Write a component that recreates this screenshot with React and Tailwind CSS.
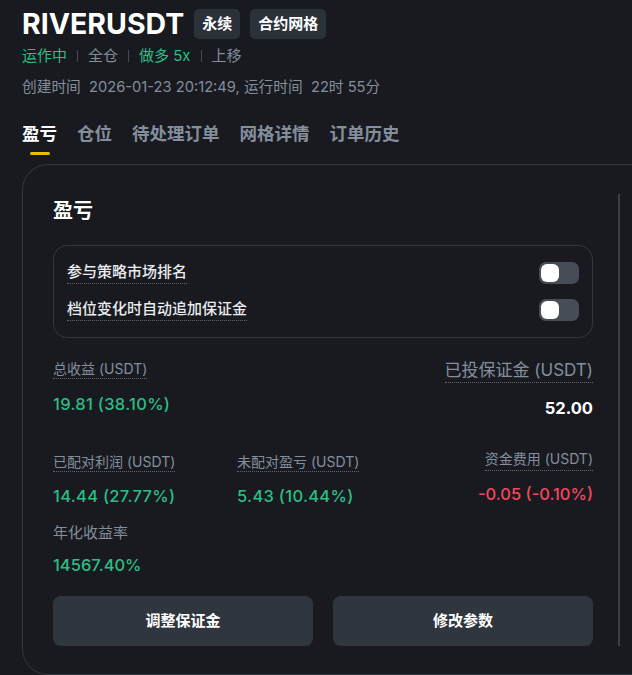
import React from 'react';

const green = 'text-[#2ebd85]';

function Toggle() {
  return (
    <div className="w-[40px] h-[22px] rounded-[7px] bg-[#474d57] p-[2px] flex items-center">
      <div className="w-[18px] h-[18px] rounded-[6px] bg-white" />
    </div>
  );
}

function Dotted({ children, className = '' }) {
  return (
    <span className={`border-b border-dotted border-[#5e6673] pb-[1px] ${className}`}>{children}</span>
  );
}

export default function App() {
  const tabs = ['盈亏', '仓位', '待处理订单', '网格详情', '订单历史'];
  return (
    <div
      className="min-h-screen h-[675px] overflow-hidden bg-[#181a20] text-[#eaecef] pl-[22px]"
      style={{ fontFamily: 'Inter, "Noto Sans CJK SC", sans-serif' }}
    >
      {/* Header */}
      <div className="flex items-center gap-[10px] pt-[9px]">
        <h1 className="text-[28.5px] leading-[30px] font-bold text-white">RIVERUSDT</h1>
        <span className="h-[30px] px-[8px] flex items-center rounded-[5px] bg-[#2b3139] text-[15px] font-bold text-white">永续</span>
        <span className="h-[30px] px-[8px] flex items-center rounded-[5px] bg-[#2b3139] text-[15px] font-bold text-white">合约网格</span>
      </div>
      <div className="flex items-center mt-[6px] text-[15px] leading-[22px]">
        <span className={green}>运作中</span>
        <span className="mx-[10px] w-px h-[12px] bg-[#474d57]" />
        <span className="text-[#848e9c]">全仓</span>
        <span className="mx-[10px] w-px h-[12px] bg-[#474d57]" />
        <span className={green}>做多 5x</span>
        <span className="mx-[10px] w-px h-[12px] bg-[#474d57]" />
        <span className="text-[#848e9c]">上移</span>
      </div>
      <div className="mt-[10px] text-[14.7px] leading-[20px] text-[#848e9c]">
        创建时间&nbsp; 2026-01-23 20:12:49, 运行时间&nbsp; 22时 55分
      </div>

      {/* Tabs */}
      <div className="flex gap-[20px] mt-[25px]">
        {tabs.map((t, i) => (
          <div key={t} className="flex flex-col items-center">
            <span className={`text-[17.5px] leading-[24px] font-semibold ${i === 0 ? 'text-white' : 'text-[#848e9c]'}`}>{t}</span>
            <span className={`mt-[6px] w-[20px] h-[3px] rounded-full ${i === 0 ? 'bg-[#f0b90b]' : 'bg-transparent'}`} />
          </div>
        ))}
      </div>

      {/* Card */}
      <div className="mt-[9px] -mr-[40px] border border-[#33373e] rounded-[26px] pl-[30px] pt-[33px] h-[511px] relative">
        <div className="absolute left-[595px] top-[29px] w-[2px] h-[452px] bg-[#3a3e45]" />
        <div className="w-[540px]">
          <h2 className="text-[20px] leading-[26px] font-bold text-white">盈亏</h2>

          <div className="mt-[21px] border border-[#33373e] rounded-[14px] px-[13px] py-[16px] flex flex-col gap-[15px]">
            <div className="flex items-center justify-between">
              <Dotted className="text-[15px] leading-[20px] font-medium text-[#eaecef]">参与策略市场排名</Dotted>
              <Toggle />
            </div>
            <div className="flex items-center justify-between">
              <Dotted className="text-[15px] leading-[20px] font-medium text-[#eaecef]">档位变化时自动追加保证金</Dotted>
              <Toggle />
            </div>
          </div>

          <div className="mt-[18px] flex justify-between">
            <div>
              <Dotted className="text-[14px] leading-[20px] text-[#848e9c]">总收益 (USDT)</Dotted>
              <div className={`mt-[13px] text-[16.5px] leading-[22px] font-medium tracking-[0.3px] ${green}`}>19.81 (38.10%)</div>
            </div>
            <div className="flex flex-col items-end pt-[3px]">
              <Dotted className="text-[17px] leading-[22px] text-[#848e9c]">已投保证金 (USDT)</Dotted>
              <div className="mt-[14px] text-[16.5px] leading-[22px] font-bold text-white">52.00</div>
            </div>
          </div>

          <div className="mt-[30px] flex">
            <div className="w-[184px]">
              <Dotted className="text-[14px] leading-[20px] text-[#848e9c]">已配对利润 (USDT)</Dotted>
              <div className={`mt-[12px] text-[16.5px] leading-[22px] font-medium tracking-[0.3px] ${green}`}>14.44 (27.77%)</div>
            </div>
            <div className="flex-1">
              <Dotted className="text-[14px] leading-[20px] text-[#848e9c]">未配对盈亏 (USDT)</Dotted>
              <div className={`mt-[12px] text-[16.5px] leading-[22px] font-medium tracking-[0.3px] ${green}`}>5.43 (10.44%)</div>
            </div>
            <div className="flex flex-col items-end">
              <Dotted className="text-[14px] leading-[20px] text-[#848e9c]">资金费用 (USDT)</Dotted>
              <div className="mt-[12px] text-[16.5px] leading-[22px] font-medium text-[#f6465d]">-0.05 (-0.10%)</div>
            </div>
          </div>

          <div className="mt-[16px] text-[15px] leading-[20px] text-[#848e9c]">年化收益率</div>
          <div className={`mt-[11px] text-[16.5px] leading-[22px] font-medium ${green}`}>14567.40%</div>

          <div className="mt-[20px] flex gap-[20px]">
            <button className="flex-1 h-[50px] rounded-[8px] bg-[#2f363e] text-[15px] font-bold text-white">调整保证金</button>
            <button className="flex-1 h-[50px] rounded-[8px] bg-[#2f363e] text-[15px] font-bold text-white">修改参数</button>
          </div>
        </div>
      </div>
    </div>
  );
}
